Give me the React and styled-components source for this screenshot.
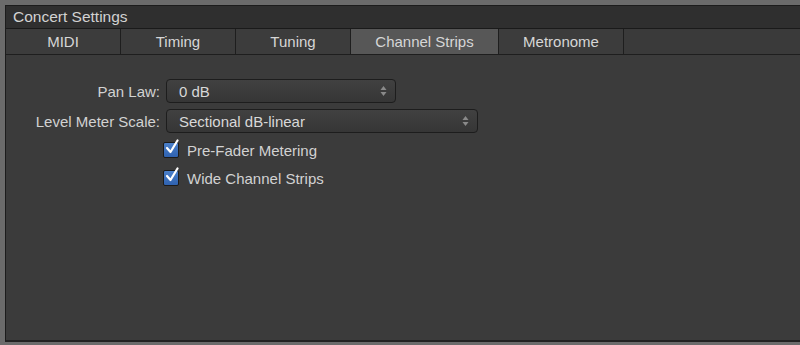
import React from "react";
import styled, { createGlobalStyle } from "styled-components";

const GlobalStyle = createGlobalStyle`
  html, body {
    margin: 0;
    padding: 0;
    background: #6b6b6b;
    font-family: "Liberation Sans", Arial, sans-serif;
    font-size: 15px;
  }
`;

const Styled = {
  Page: styled.div`
    width: 800px;
    height: 345px;
    padding: 5px 0 3px 5px;
    box-sizing: border-box;
    overflow: hidden;
  `,
  Window: styled.div`
    height: 100%;
    width: 800px;
    display: flex;
    flex-direction: column;
    background: #3b3b3b;
    border-top: 1px solid #1c1c1c;
    border-left: 1px solid #1c1c1c;
    border-bottom: 2px solid #222;
    box-sizing: border-box;
  `,
  TitleBar: styled.div`
    height: 22px;
    display: flex;
    align-items: center;
    padding-left: 7px;
    background: #2f2f2f;
    color: #d2d2d2;
    font-size: 15.5px;
    border-bottom: 1px solid #1a1a1a;
  `,
  Tabs: styled.div`
    display: flex;
    height: 25px;
    border-bottom: 1px solid #1e1e1e;
    background: #3a3a3a;
  `,
  Tab: styled.div`
    width: ${(p) => p.$w}px;
    box-sizing: border-box;
    display: flex;
    align-items: center;
    justify-content: center;
    border-right: 1px solid #1e1e1e;
    color: #d6d6d6;
    font-size: 15px;
    background: ${(p) => (p.$active ? "#575757" : "#3c3c3c")};
  `,
  Body: styled.div`
    flex: 1;
    padding-top: 24px;
    display: grid;
    grid-template-columns: 154px auto;
    grid-auto-rows: min-content;
    column-gap: 6px;
    row-gap: 6px;
    align-content: start;
  `,
  Label: styled.div`
    text-align: right;
    color: #d2d2d2;
    font-size: 15px;
    align-self: center;
  `,
  Popup: styled.div`
    width: ${(p) => p.$w}px;
    height: 24px;
    box-sizing: border-box;
    display: flex;
    align-items: center;
    justify-content: space-between;
    padding: 0 8px 0 12px;
    border: 1px solid #1d1d1d;
    border-radius: 4px;
    background: linear-gradient(#414141, #363636);
    color: #d8d8d8;
    font-size: 15px;
  `,
  CheckRow: styled.label`
    grid-column: 2;
    display: flex;
    align-items: center;
    gap: 8px;
    margin-left: -3px;
    color: #d2d2d2;
    font-size: 15px;
    height: 22px;
  `,
  Box: styled.span`
    width: 14px;
    height: 14px;
    border-radius: 2px;
    border: 1px solid #1b1b1b;
    background: linear-gradient(#4a7fc9, #2f62b0);
    display: flex;
    align-items: center;
    justify-content: center;
    position: relative;
  `,
};

const Arrows = () => (
  <svg width="7" height="12" viewBox="0 0 7 12">
    <path d="M3.5 1 L6.5 5 L0.5 5 Z" fill="#8a8a8a" />
    <path d="M3.5 11 L6.5 7 L0.5 7 Z" fill="#8a8a8a" />
  </svg>
);

const Check = () => (
  <svg
    width="14"
    height="16"
    viewBox="0 0 14 16"
    style={{ position: "absolute", left: 1, top: -4 }}
  >
    <path
      d="M2 9 L5.5 13 L12.5 1.5"
      fill="none"
      stroke="#fff"
      strokeWidth="2.2"
      strokeLinecap="round"
      strokeLinejoin="round"
    />
  </svg>
);

const tabs = [
  { name: "MIDI", w: 115 },
  { name: "Timing", w: 115 },
  { name: "Tuning", w: 115 },
  { name: "Channel Strips", w: 148, active: true },
  { name: "Metronome", w: 125 },
];

const App = () => {
  return (
    <Styled.Page>
      <GlobalStyle />
      <Styled.Window>
        <Styled.TitleBar>Concert Settings</Styled.TitleBar>
        <Styled.Tabs>
          {tabs.map((t) => (
            <Styled.Tab key={t.name} $w={t.w} $active={t.active}>
              {t.name}
            </Styled.Tab>
          ))}
        </Styled.Tabs>
        <Styled.Body>
          <Styled.Label>Pan Law:</Styled.Label>
          <Styled.Popup $w={230}>
            <span>0 dB</span>
            <Arrows />
          </Styled.Popup>
          <Styled.Label>Level Meter Scale:</Styled.Label>
          <Styled.Popup $w={312}>
            <span>Sectional dB-linear</span>
            <Arrows />
          </Styled.Popup>
          <Styled.CheckRow>
            <Styled.Box>
              <Check />
            </Styled.Box>
            Pre-Fader Metering
          </Styled.CheckRow>
          <Styled.CheckRow>
            <Styled.Box>
              <Check />
            </Styled.Box>
            Wide Channel Strips
          </Styled.CheckRow>
        </Styled.Body>
      </Styled.Window>
    </Styled.Page>
  );
};

export default App;
